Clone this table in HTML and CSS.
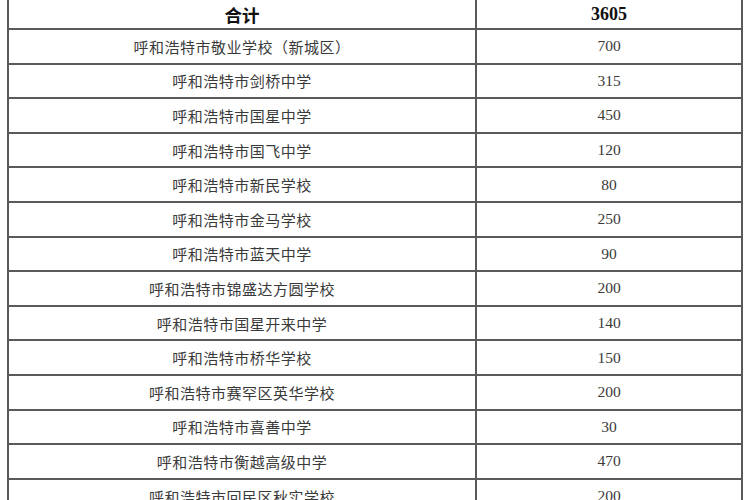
FILE: index.html
```html
<!DOCTYPE html>
<html lang="zh">
<head>
<meta charset="utf-8">
<title>学校名额表</title>
<link rel="stylesheet" href="styles.css">
</head>
<body>
<div class="page">
<table class="quota">
  <colgroup><col class="c-name"><col class="c-num"></colgroup>
  <tr class="head"><td class="name">合计</td><td class="num">3605</td></tr>
  <tr><td class="name">呼和浩特市敬业学校（新城区）</td><td class="num">700</td></tr>
  <tr><td class="name">呼和浩特市剑桥中学</td><td class="num">315</td></tr>
  <tr><td class="name">呼和浩特市国星中学</td><td class="num">450</td></tr>
  <tr><td class="name">呼和浩特市国飞中学</td><td class="num">120</td></tr>
  <tr><td class="name">呼和浩特市新民学校</td><td class="num">80</td></tr>
  <tr><td class="name">呼和浩特市金马学校</td><td class="num">250</td></tr>
  <tr><td class="name">呼和浩特市蓝天中学</td><td class="num">90</td></tr>
  <tr><td class="name">呼和浩特市锦盛达方圆学校</td><td class="num">200</td></tr>
  <tr><td class="name">呼和浩特市国星开来中学</td><td class="num">140</td></tr>
  <tr><td class="name">呼和浩特市桥华学校</td><td class="num">150</td></tr>
  <tr><td class="name">呼和浩特市赛罕区英华学校</td><td class="num">200</td></tr>
  <tr><td class="name">呼和浩特市喜善中学</td><td class="num">30</td></tr>
  <tr><td class="name">呼和浩特市衡越高级中学</td><td class="num">470</td></tr>
  <tr><td class="name">呼和浩特市回民区秋实学校</td><td class="num">200</td></tr>
</table>
</div>
</body>
</html>
```
FILE: styles.css
```css
html, body {
  margin: 0;
  padding: 0;
  background: #ffffff;
}
.page {
  width: 750px;
  height: 500px;
  overflow: hidden;
  padding-left: 7px;
  box-sizing: border-box;
}
.quota {
  border-collapse: collapse;
  table-layout: fixed;
  width: 734px;
}
.c-name { width: 468px; }
.c-num { width: 266px; }
.quota tr { height: 34.6px; }
.quota tr.head { height: 29px; }
.quota td {
  border: 2px solid #5a5a5a;
  padding: 0;
  text-align: center;
  vertical-align: middle;
  color: #3a3a3a;
}
.quota tr.head td {
  border-top: none;
  padding-top: 1px;
}
.name {
  font-family: "Noto Sans CJK SC", "Liberation Serif", serif;
  font-size: 15px;
  letter-spacing: 0.5px;
  padding-left: 2px;
}
.num {
  font-family: "Liberation Serif", serif;
  font-size: 15.5px;
}
.head .name {
  font-size: 17.5px;
  font-weight: 700;
  color: #111;
  letter-spacing: 0;
}
.head .num {
  font-size: 18px;
  font-weight: 700;
  color: #111;
}
```
